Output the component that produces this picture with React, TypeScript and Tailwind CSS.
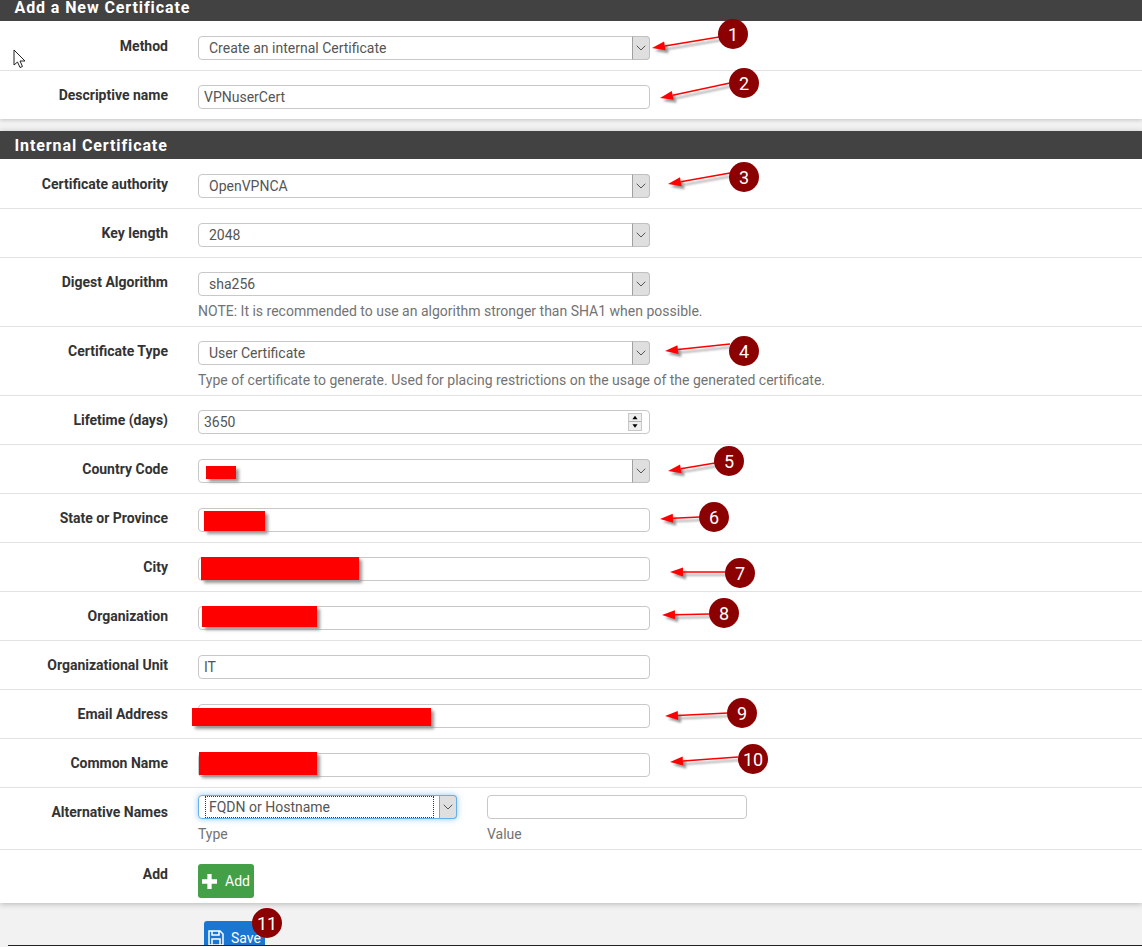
import { ChevronDown } from 'lucide-react'

const font = "font-['Roboto','Liberation_Sans',sans-serif]"

function Label({ children }: { children: string }) {
  return (
    <div className="w-[168px] shrink-0 text-right text-[14px] font-bold leading-[20px] text-[#333333]">
      {children}
    </div>
  )
}

function SelectButton({ focused }: { focused?: boolean }) {
  return (
    <span className={`${focused ? 'border-[#66afe9]' : 'border-[#c0c0c0]'} flex h-[24px] w-[18px] items-center justify-center rounded-r-[4px] border border-l-[#a0a0a0] bg-[#dfdfdf] -mr-[1px]`}>
      <ChevronDown size={16} strokeWidth={1.5} className="text-[#555555]" />
    </span>
  )
}

function Select({ value }: { value: string }) {
  return (
    <div className="flex h-[24px] w-[452px] items-center rounded-[4px] border border-[#c8c8c8] bg-white pl-[10px] text-[14px] text-[#555555]">
      <span className="flex-1">{value}</span>
      <SelectButton />
    </div>
  )
}

function Input({ value = '' }: { value?: string }) {
  return (
    <div className="flex h-[24px] w-[452px] items-center rounded-[4px] border border-[#c8c8c8] bg-white pl-[5px] text-[14px] text-[#555555]">
      {value}
    </div>
  )
}

function Row({ label, help, children }: { label: string; help?: string; children: React.ReactNode }) {
  return (
    <div className={`${help ? 'pb-[5px]' : 'pb-[10px]'} flex gap-[30px] border-t border-[#e2e2e2] pt-[14px]`}>
      <Label>{label}</Label>
      <div>
        {children}
        {help && <p className="mt-[5px] text-[14px] leading-[20px] text-[#737373]">{help}</p>}
      </div>
    </div>
  )
}

function Header({ title, className }: { title: string; className: string }) {
  return (
    <div className={`${className} flex items-center bg-[#424242] pl-[14.5px] text-[16px] font-bold tracking-[0.9px] text-white`}>
      {title}
    </div>
  )
}

const arrows = [
  { n: '1', cx: 733, cy: 34, x1: 719, y1: 37, x2: 652, y2: 48 },
  { n: '2', cx: 744, cy: 83, x1: 730, y1: 83, x2: 660, y2: 98 },
  { n: '3', cx: 744, cy: 177, x1: 730, y1: 173, x2: 668, y2: 184 },
  { n: '4', cx: 744, cy: 351, x1: 730, y1: 344, x2: 665, y2: 351 },
  { n: '5', cx: 729, cy: 461, x1: 715, y1: 463, x2: 668, y2: 471 },
  { n: '6', cx: 714, cy: 517, x1: 700, y1: 517, x2: 660, y2: 519 },
  { n: '7', cx: 740, cy: 573, x1: 726, y1: 572, x2: 670, y2: 572 },
  { n: '8', cx: 724, cy: 613, x1: 710, y1: 614, x2: 662, y2: 615 },
  { n: '9', cx: 742, cy: 713, x1: 728, y1: 713, x2: 665, y2: 716 },
  { n: '10', cx: 753, cy: 759, x1: 738, y1: 757, x2: 670, y2: 762 },
]

const redacted = [
  'left-[206px] top-[466px] h-[13px] w-[30px]',
  'left-[204px] top-[511px] h-[20px] w-[61px]',
  'left-[201px] top-[557px] h-[23px] w-[158px]',
  'left-[202px] top-[606px] h-[21px] w-[115px]',
  'left-[192px] top-[708px] h-[18px] w-[239px]',
  'left-[199px] top-[752px] h-[23px] w-[118px]',
]

function Arrows() {
  return (
    <svg className="absolute left-0 top-0" width="1142" height="947">
      <defs>
        <filter id="soft"><feGaussianBlur stdDeviation="1.1" /></filter>
      </defs>
      {arrows.map(a => {
        const dx = a.x2 - a.x1
        const dy = a.y2 - a.y1
        const len = Math.hypot(dx, dy)
        const ux = dx / len
        const uy = dy / len
        const bx = a.x2 - ux * 13
        const by = a.y2 - uy * 13
        const head = `${a.x2},${a.y2} ${bx - uy * 4.5},${by + ux * 4.5} ${bx + uy * 4.5},${by - ux * 4.5}`
        return (
          <g key={a.n}>
            <g opacity="0.6" transform="translate(3 3)" filter="url(#soft)">
              <line x1={a.x1} y1={a.y1} x2={bx} y2={by} stroke="#555555" strokeWidth="1.5" />
              <polygon points={head} fill="#555555" />
            </g>
            <line x1={a.x1} y1={a.y1} x2={bx} y2={by} stroke="#ff0000" strokeWidth="1.5" />
            <polygon points={head} fill="#ff0000" />
          </g>
        )
      })}
    </svg>
  )
}

function Badge({ n, className }: { n: string; className: string }) {
  return (
    <div className={`${className} absolute flex h-[30px] w-[30px] items-center justify-center rounded-full bg-[#8b0000] text-[18px] text-white`}>
      {n}
    </div>
  )
}

const badgeSpots: Record<string, string> = {
  '1': 'left-[718px] top-[19px]',
  '2': 'left-[729px] top-[68px]',
  '3': 'left-[729px] top-[162px]',
  '4': 'left-[729px] top-[336px]',
  '5': 'left-[714px] top-[446px]',
  '6': 'left-[699px] top-[502px]',
  '7': 'left-[725px] top-[558px]',
  '8': 'left-[709px] top-[598px]',
  '9': 'left-[727px] top-[698px]',
  '10': 'left-[738px] top-[744px]',
}

export default function App() {
  return (
    <div className={`${font} relative h-[947px] w-[1142px] overflow-hidden bg-[#f2f2f2]`}>
      {/* First panel */}
      <div className="h-[119px] bg-white shadow-[0_1px_4px_rgba(0,0,0,0.2)]">
        <Header title="Add a New Certificate" className="h-[21px] pb-[5px] leading-[14px]" />
        <div className="flex gap-[30px] pb-[10px] pt-[15px]">
          <Label>Method</Label>
          <Select value="Create an internal Certificate" />
        </div>
        <Row label="Descriptive name"><Input value="VPNuserCert" /></Row>
      </div>

      {/* Internal Certificate */}
      <div className="mt-[12px] bg-white shadow-[0_1px_6px_rgba(0,0,0,0.25)]">
        <Header title="Internal Certificate" className="h-[28px] pt-[1px]" />
        <div className="flex gap-[30px] pb-[10px] pt-[15px]">
          <Label>Certificate authority</Label>
          <Select value="OpenVPNCA" />
        </div>
        <Row label="Key length"><Select value="2048" /></Row>
        <Row label="Digest Algorithm" help="NOTE: It is recommended to use an algorithm stronger than SHA1 when possible.">
          <Select value="sha256" />
        </Row>
        <Row label="Certificate Type" help="Type of certificate to generate. Used for placing restrictions on the usage of the generated certificate.">
          <Select value="User Certificate" />
        </Row>
        <Row label="Lifetime (days)">
          <div className="flex h-[24px] w-[452px] items-center rounded-[4px] border border-[#c8c8c8] bg-white pl-[5px] pr-[7px] text-[14px] text-[#555555]">
            <span className="flex-1">3650</span>
            <span className="flex h-[18px] w-[14px] flex-col border border-[#c8c8c8] bg-[#eeeeee] text-black">
              <svg viewBox="0 0 14 8" className="h-[8px] w-full border-b border-[#b0b0b0]"><path d="M7 2 L10 6 H4 Z" fill="currentColor" /></svg>
              <svg viewBox="0 0 14 8" className="h-[8px] w-full"><path d="M7 6 L10 2 H4 Z" fill="currentColor" /></svg>
            </span>
          </div>
        </Row>
        <Row label="Country Code"><Select value="" /></Row>
        <Row label="State or Province"><Input /></Row>
        <Row label="City"><Input /></Row>
        <Row label="Organization"><Input /></Row>
        <Row label="Organizational Unit"><Input value="IT" /></Row>
        <Row label="Email Address"><Input /></Row>
        <Row label="Common Name"><Input /></Row>

        <div className="flex gap-[30px] border-t border-[#e2e2e2] pb-[5px] pt-[7px]">
          <div className="pt-[7px]"><Label>Alternative Names</Label></div>
          <div className="w-[259px]">
            <div className="flex h-[24px] w-[259px] items-center rounded-[4px] border border-[#66afe9] bg-white pl-[6px] text-[14px] text-[#555555] shadow-[0_0_6px_rgba(102,175,233,0.7)]">
              <span className="mr-[5px] flex h-[22px] flex-1 items-center border border-dotted border-[#333333] pl-[3px]">FQDN or Hostname</span>
              <SelectButton focused />
            </div>
            <p className="mt-[5px] text-[14px] leading-[20px] text-[#737373]">Type</p>
          </div>
          <div>
            <div className="h-[24px] w-[260px] rounded-[4px] border border-[#c8c8c8] bg-white" />
            <p className="mt-[5px] text-[14px] leading-[20px] text-[#737373]">Value</p>
          </div>
        </div>

        <div className="flex gap-[30px] border-t border-[#e2e2e2] pb-[5px] pt-[14px]">
          <Label>Add</Label>
          <button className="flex h-[34px] w-[56px] items-center gap-[8px] rounded-[3px] bg-[#43a047] pl-[4px] text-[14px] text-white">
            <svg viewBox="0 0 14 14" className="h-[15px] w-[15px]" fill="white">
              <path d="M5 0 H9 V5 H14 V9 H9 V14 H5 V9 H0 V5 H5 Z" />
            </svg>
            Add
          </button>
        </div>
      </div>

      <div className="ml-[204px] mt-[18px]">
        <button className="flex h-[34px] w-[61px] items-center gap-[7px] rounded-[3px] bg-[#1976d2] pl-[4px] text-[14px] text-white">
          <svg viewBox="0 0 16 16" className="h-[16px] w-[16px]" fill="none" stroke="white" strokeWidth="1.5">
            <path d="M1 1 H12 L15 4 V15 H1 Z" />
            <path d="M4 1 V5 H11 V1" />
            <path d="M4 15 V9 H12 V15" />
          </svg>
          Save
        </button>
      </div>

      {/* Annotations drawn over the screenshot */}
      <svg className="absolute left-[13px] top-[49px]" width="13" height="20" viewBox="0 0 13 20">
        <path d="M1 1 V16 L4.5 13 L7 18.5 L9.5 17.5 L7 12 H12 Z" fill="white" stroke="#222222" strokeWidth="1" />
      </svg>
      {redacted.map(r => (
        <div key={r} className={`${r} absolute bg-[#ff0000] shadow-[3px_3px_3px_#999999]`} />
      ))}
      <Arrows />
      {arrows.map(a => <Badge key={a.n} n={a.n} className={badgeSpots[a.n]} />)}
      <Badge n="11" className="left-[252px] top-[908px]" />
      <div className="absolute bottom-0 left-[8px] right-0 h-[2px] border-t border-[#222222] bg-white" />
    </div>
  )
}
